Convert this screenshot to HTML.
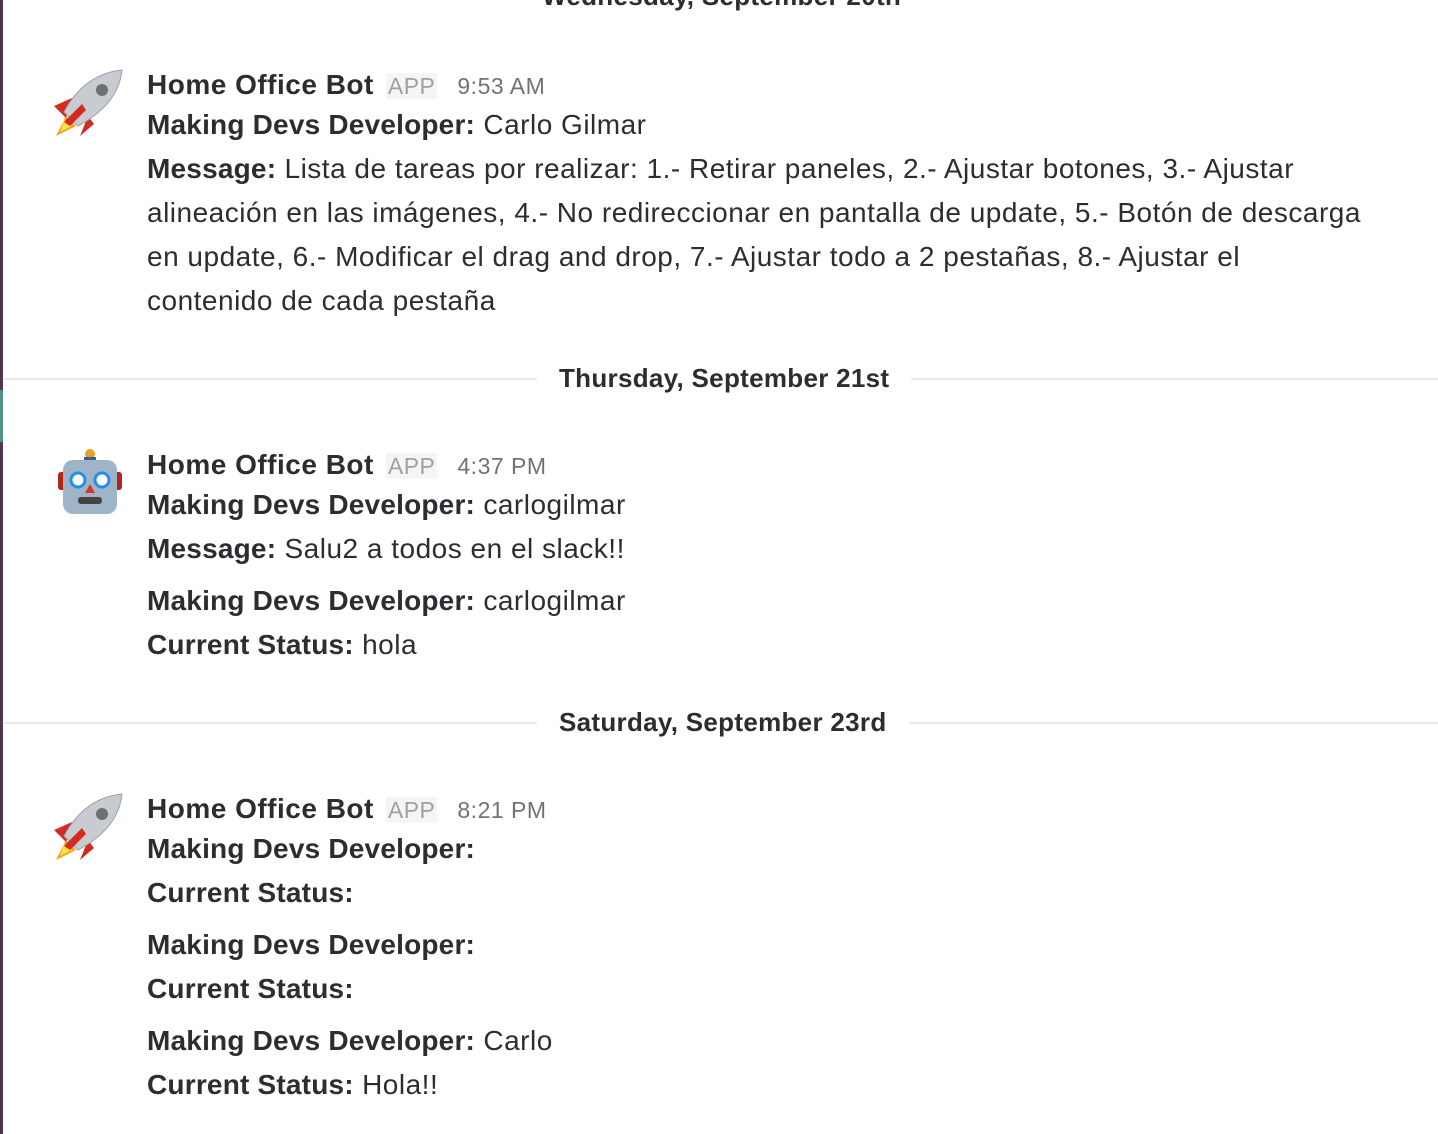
<!DOCTYPE html>
<html><head><meta charset="utf-8"><style>
body{margin:0;width:1438px;height:1134px;background:#fff;position:relative;overflow:hidden;font-family:"Liberation Sans",sans-serif;color:#2c2d30}
.l{position:absolute;left:147px;font-size:28px;letter-spacing:0.5px;white-space:nowrap;line-height:44px}
b{font-weight:bold;letter-spacing:0.2px}
.h{position:absolute;left:147px;font-size:28px;white-space:nowrap;line-height:38px}
.h b{letter-spacing:0.5px}
.app{color:#a0a0a2;background:#f5f5f5;font-size:23px;padding:0 2px;margin-left:12px;font-weight:normal;letter-spacing:0.5px}
.t{color:#717274;font-size:23px;margin-left:20px;letter-spacing:0.5px}
.d{position:absolute;left:4px;right:0;height:0;border-top:2px solid #e8e8e8}
.dl{position:absolute;background:#fff;padding:0 22px;font-size:26px;font-weight:bold;line-height:36px;letter-spacing:0.3px}
.strip{position:absolute;left:0;top:0;width:3px;height:1134px;background:#4d394b}
</style></head><body>
<div class="strip"></div><div style="position:absolute;left:0;top:390px;width:3px;height:52px;background:#4c9689"></div>
<div class="dl" style="left:520px;top:-22px">Wednesday, September 20th</div>

<svg style="position:absolute;left:52px;top:68px" width="72" height="70" viewBox="0 0 72 70">
<path d="M14 48 L4 68 L24 58Z" fill="#f6a21b"/><path d="M12 52 L8 64 L20 58Z" fill="#fde047"/>
<path d="M20 30 L2 38 L14 50Z" fill="#d32b1f"/><path d="M36 48 L28 68 L42 56Z" fill="#d32b1f"/>
<path d="M70 2 C50 4 28 14 12 44 L26 58 C56 42 68 22 70 2Z" fill="#c8ccd0" stroke="#9aa0a6"/>
<circle cx="50" cy="22" r="6" fill="#6b7075"/>
<path d="M12 54 L30 36 L34 42 L18 58Z" fill="#d32b1f"/></svg>
<div class="h" style="top:66px"><b>Home Office Bot</b><span class="app">APP</span><span class="t">9:53 AM</span></div>
<div class="l" style="top:103px"><b>Making Devs Developer:</b> Carlo Gilmar</div>
<div class="l" style="top:147px"><b>Message:</b> Lista de tareas por realizar: 1.- Retirar paneles, 2.- Ajustar botones, 3.- Ajustar</div>
<div class="l" style="top:191px">alineación en las imágenes, 4.- No redireccionar en pantalla de update, 5.- Botón de descarga</div>
<div class="l" style="top:235px">en update, 6.- Modificar el drag and drop, 7.- Ajustar todo a 2 pestañas, 8.- Ajustar el</div>
<div class="l" style="top:279px">contenido de cada pestaña</div>

<div class="d" style="top:378px"></div>
<div class="dl" style="left:537px;top:360px">Thursday, September 21st</div>

<svg style="position:absolute;left:56px;top:446px" width="68" height="70" viewBox="0 0 68 70">
<circle cx="34" cy="8" r="5" fill="#e8a020"/><rect x="28" y="11" width="12" height="4" fill="#3a5f8a"/>
<rect x="2" y="26" width="8" height="18" rx="3" fill="#b0261a"/><rect x="58" y="26" width="8" height="18" rx="3" fill="#b0261a"/>
<rect x="7" y="14" width="54" height="54" rx="10" fill="#9fb4c8"/>
<circle cx="22" cy="34" r="7" fill="#fff" stroke="#1e90e8" stroke-width="3"/><circle cx="46" cy="34" r="7" fill="#fff" stroke="#1e90e8" stroke-width="3"/>
<path d="M34 38 L29 47 L39 47Z" fill="#d63a1a"/><rect x="22" y="51" width="24" height="7" rx="3" fill="#444"/></svg>
<div class="h" style="top:446px"><b>Home Office Bot</b><span class="app">APP</span><span class="t">4:37 PM</span></div>
<div class="l" style="top:483px"><b>Making Devs Developer:</b> carlogilmar</div>
<div class="l" style="top:527px"><b>Message:</b> Salu2 a todos en el slack!!</div>
<div class="l" style="top:579px"><b>Making Devs Developer:</b> carlogilmar</div>
<div class="l" style="top:623px"><b>Current Status:</b> hola</div>

<div class="d" style="top:722px"></div>
<div class="dl" style="left:537px;top:704px">Saturday, September 23rd</div>

<svg style="position:absolute;left:52px;top:792px" width="72" height="70" viewBox="0 0 72 70">
<path d="M14 48 L4 68 L24 58Z" fill="#f6a21b"/><path d="M12 52 L8 64 L20 58Z" fill="#fde047"/>
<path d="M20 30 L2 38 L14 50Z" fill="#d32b1f"/><path d="M36 48 L28 68 L42 56Z" fill="#d32b1f"/>
<path d="M70 2 C50 4 28 14 12 44 L26 58 C56 42 68 22 70 2Z" fill="#c8ccd0" stroke="#9aa0a6"/>
<circle cx="50" cy="22" r="6" fill="#6b7075"/>
<path d="M12 54 L30 36 L34 42 L18 58Z" fill="#d32b1f"/></svg>
<div class="h" style="top:790px"><b>Home Office Bot</b><span class="app">APP</span><span class="t">8:21 PM</span></div>
<div class="l" style="top:827px"><b>Making Devs Developer:</b></div>
<div class="l" style="top:871px"><b>Current Status:</b></div>
<div class="l" style="top:923px"><b>Making Devs Developer:</b></div>
<div class="l" style="top:967px"><b>Current Status:</b></div>
<div class="l" style="top:1019px"><b>Making Devs Developer:</b> Carlo</div>
<div class="l" style="top:1063px"><b>Current Status:</b> Hola!!</div>
</body></html>
